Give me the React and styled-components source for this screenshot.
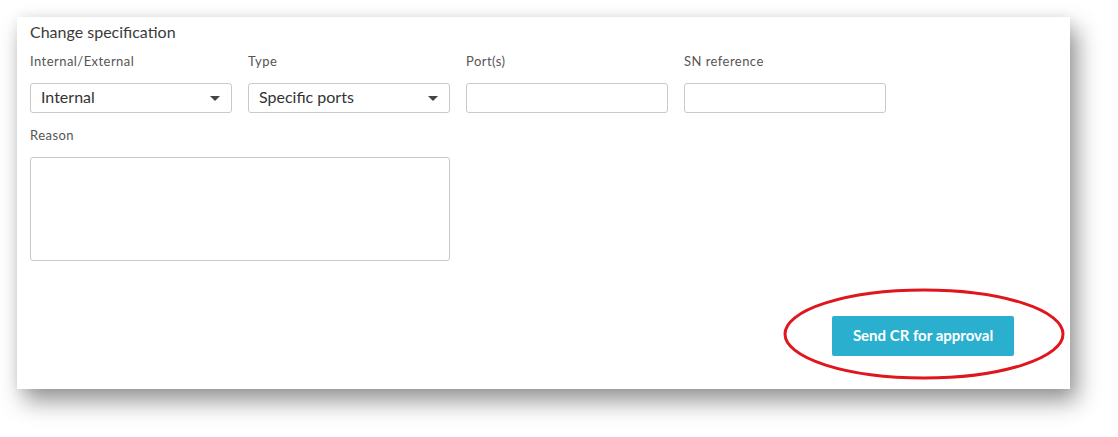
import styled, { createGlobalStyle } from "styled-components";

const GlobalStyle = createGlobalStyle`
  html, body {
    margin: 0;
    padding: 0;
    background: #fff;
  }
  body {
    font-family: Lato, "Liberation Sans", sans-serif;
  }
`;

const Page = styled.div`
  width: 1118px;
  height: 437px;
  padding: 17px 0 0 17px;
  box-sizing: border-box;
`;

const Card = styled.div`
  width: 1053px;
  height: 372px;
  box-sizing: border-box;
  background: #fff;
  padding: 5px 56px 0 13px;
  box-shadow: 7px 12px 22px rgba(0, 0, 0, 0.42), 0 0 12px rgba(0, 0, 0, 0.06);
  display: flex;
  flex-direction: column;
`;

const Title = styled.h3`
  margin: 0;
  font-size: 16px;
  line-height: 20px;
  font-weight: 400;
  color: #3a3a3a;
`;

const FieldRow = styled.div`
  display: grid;
  grid-template-columns: repeat(4, 202px);
  column-gap: 16px;
  margin-top: 11px;
`;

const Field = styled.div`
  display: flex;
  flex-direction: column;
`;

const Label = styled.label`
  font-size: 13px;
  letter-spacing: 0.45px;
  line-height: 16px;
  color: #555;
  margin-bottom: 14px;
`;

const Box = styled.div`
  height: 30px;
  box-sizing: border-box;
  border: 1px solid #c9c9c9;
  border-radius: 3px;
  background: #fff;
`;

const Select = styled(Box)`
  display: flex;
  align-items: center;
  justify-content: space-between;
  padding: 0 10px 3px 10px;
  font-size: 16px;
  color: #333;
`;

const Caret = styled.span`
  width: 0;
  height: 0;
  border-left: 5px solid transparent;
  border-right: 5px solid transparent;
  border-top: 5px solid #444;
  margin: 3px 1px 0 0;
`;

const ReasonField = styled(Field)`
  margin-top: 14px;
  width: 420px;
`;

const TextArea = styled(Box)`
  height: 104px;
`;

const Footer = styled.div`
  display: flex;
  justify-content: flex-end;
  margin-top: 55px;
`;

const ButtonWrap = styled.div`
  position: relative;
`;

const SendButton = styled.button`
  width: 182px;
  height: 40px;
  border: none;
  border-radius: 2px;
  background: #2bafcf;
  color: #fff;
  font-family: Lato, "Liberation Sans", sans-serif;
  font-size: 15px;
  font-weight: 700;
  padding: 0 0 2px;
  cursor: pointer;
`;

const Ellipse = styled.svg`
  position: absolute;
  left: -48px;
  top: -28px;
  width: 280px;
  height: 92px;
  pointer-events: none;
  overflow: visible;
`;

function SelectBox({ value }) {
  return (
    <Select>
      <span>{value}</span>
      <Caret />
    </Select>
  );
}

export default function App() {
  return (
    <>
      <GlobalStyle />
      <Page>
        <Card>
          <Title>Change specification</Title>
          <FieldRow>
            <Field>
              <Label>Internal/External</Label>
              <SelectBox value="Internal" />
            </Field>
            <Field>
              <Label>Type</Label>
              <SelectBox value="Specific ports" />
            </Field>
            <Field>
              <Label>Port(s)</Label>
              <Box />
            </Field>
            <Field>
              <Label>SN reference</Label>
              <Box />
            </Field>
          </FieldRow>
          <ReasonField>
            <Label>Reason</Label>
            <TextArea />
          </ReasonField>
          <Footer>
            <ButtonWrap>
              <SendButton>Send CR for approval</SendButton>
              <Ellipse viewBox="0 0 280 92">
                <ellipse cx="140" cy="46" rx="139" ry="44" fill="none" stroke="#e0161e" strokeWidth="3" />
              </Ellipse>
            </ButtonWrap>
          </Footer>
        </Card>
      </Page>
    </>
  );
}
